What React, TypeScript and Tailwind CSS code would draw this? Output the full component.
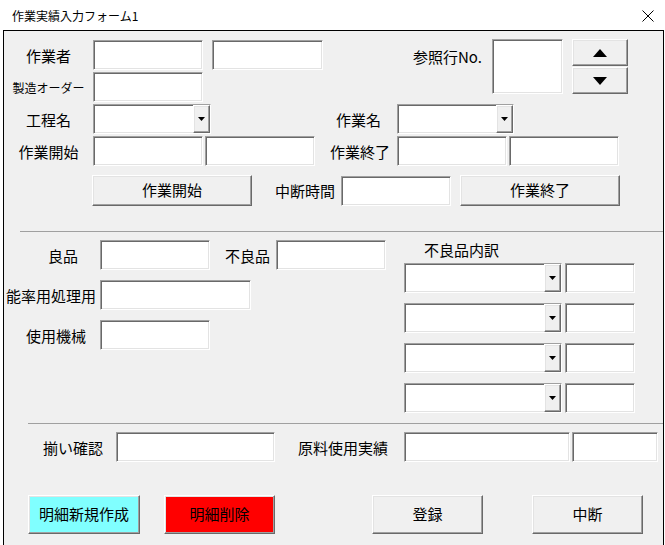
import React from 'react';

// sunken 3D edit box, like a VBA UserForm TextBox
const sunken =
  'bg-white border border-t-[#a0a0a0] border-l-[#a0a0a0] border-b-white border-r-white shadow-[inset_1px_1px_0_#696969,inset_-1px_-1px_0_#e3e3e3]';

// raised 3D command button
const raised =
  'border border-t-white border-l-white border-b-[#696969] border-r-[#696969] shadow-[inset_-1px_-1px_0_#a0a0a0,inset_1px_1px_0_#e3e3e3]';

const TextBox = ({ className = '' }: { className?: string }) => (
  <div className={`h-[30px] shrink-0 ${sunken} ${className}`} />
);

const ComboBox = ({ className = '' }: { className?: string }) => (
  <div className={`h-[30px] shrink-0 flex justify-end ${sunken} ${className}`}>
    <div className={`w-[17px] h-full flex items-center justify-center bg-[#f0f0f0] ${raised}`}>
      <svg width="7" height="4" viewBox="0 0 7 4">
        <path d="M0 0h7L3.5 4z" fill="#000" />
      </svg>
    </div>
  </div>
);

const Button = ({
  label,
  className = '',
}: {
  label: string;
  className?: string;
}) => (
  <button
    className={`shrink-0 flex items-center justify-center text-[15px] text-black ${raised} ${className}`}
  >
    {label}
  </button>
);

const App = () => {
  return (
    <div
      className="w-[665px] h-[545px] overflow-hidden bg-white text-[15px] text-black"
      style={{ fontFamily: '"Noto Sans CJK JP", "Noto Sans", sans-serif' }}
    >
      {/* title bar */}
      <div className="h-[30px] flex items-center justify-between pl-[12px] pr-[11px]">
        <span className="text-[12px] leading-none mt-[1px]">作業実績入力フォーム1</span>
        <svg width="12" height="12" viewBox="0 0 12 12" className="mt-[1px]">
          <path d="M0.5 0.5l11 11M11.5 0.5l-11 11" stroke="#000" strokeWidth="1" />
        </svg>
      </div>

      {/* form body */}
      <div className="ml-[3px] w-[661px] h-[515px] bg-[#f0f0f0] border-l border-r border-t border-black">
        {/* top block: 作業者 / 製造オーダー / 参照行 */}
        <div className="flex h-[63px] mt-[8px]">
          <div className="flex flex-col gap-[2px] pt-[1px]">
            <div className="flex items-center">
              <span className="w-[89px] text-center pt-[2px]">作業者</span>
              <TextBox className="w-[110px]" />
              <TextBox className="w-[111px] ml-[9px]" />
            </div>
            <div className="flex items-center">
              <span className="w-[89px] text-center text-[12px] pt-[2px]">製造オーダー</span>
              <TextBox className="w-[110px]" />
            </div>
          </div>
          <span className="ml-[90px] w-[79px] mt-[7px] h-[20px]">参照行No.</span>
          <div className={`w-[71px] h-[55px] ${sunken}`} />
          <div className="ml-[9px] flex flex-col gap-[1px]">
            <div className={`w-[56px] h-[27px] flex items-center justify-center ${raised}`}>
              <svg width="14" height="8" viewBox="0 0 14 8">
                <path d="M7 0L14 8H0z" fill="#000" />
              </svg>
            </div>
            <div className={`w-[56px] h-[27px] flex items-center justify-center ${raised}`}>
              <svg width="14" height="8" viewBox="0 0 14 8">
                <path d="M0 0h14L7 8z" fill="#000" />
              </svg>
            </div>
          </div>
        </div>

        {/* 工程名 / 作業名 */}
        <div className="flex items-center mt-[2px]">
          <span className="w-[89px] text-center pt-[2px]">工程名</span>
          <ComboBox className="w-[118px]" />
          <span className="w-[186px] text-right pr-[16px] pt-[2px]">作業名</span>
          <ComboBox className="w-[117px]" />
        </div>

        {/* 作業開始 / 作業終了 */}
        <div className="flex items-center mt-[2px]">
          <span className="w-[89px] text-center pt-[2px]">作業開始</span>
          <TextBox className="w-[110px]" />
          <TextBox className="w-[110px] ml-[2px]" />
          <span className="w-[82px] text-right pr-[7px] pt-[2px]">作業終了</span>
          <TextBox className="w-[110px]" />
          <TextBox className="w-[110px] ml-[2px]" />
        </div>

        {/* buttons + 中断時間 */}
        <div className="flex items-center mt-[9px]">
          <Button label="作業開始" className="ml-[88px] w-[160px] h-[31px]" />
          <span className="ml-[23px] w-[66px] pt-[2px]">中断時間</span>
          <TextBox className="w-[110px]" />
          <Button label="作業終了" className="ml-[9px] w-[160px] h-[31px]" />
        </div>

        <div className="mt-[25px] ml-[16px] border-t border-[#a0a0a0]" />

        {/* 良品 / 不良品 / 不良品内訳 */}
        <div className="flex mt-[8px]">
          <div className="w-[382px] flex flex-col gap-[10px]">
            <div className="flex items-center">
              <span className="w-[96px] text-right pr-[22px] pt-[2px]">良品</span>
              <TextBox className="w-[110px]" />
              <span className="w-[66px] text-right pr-[6px] pt-[2px]">不良品</span>
              <TextBox className="w-[110px]" />
            </div>
            <div className="flex items-center">
              <span className="w-[96px] text-right pr-[4px] pt-[2px]">能率用処理用</span>
              <TextBox className="w-[151px]" />
            </div>
            <div className="flex items-center">
              <span className="w-[96px] text-right pr-[14px] pt-[2px]">使用機械</span>
              <TextBox className="w-[110px]" />
            </div>
          </div>
          <div className="ml-[18px] flex flex-col">
            <span className="ml-[20px] h-[18px] leading-[18px] mt-[1px]">不良品内訳</span>
            <div className="mt-[4px] flex flex-col gap-[10px]">
              {[0, 1, 2, 3].map((i) => (
                <div key={i} className="flex">
                  <ComboBox className="w-[158px]" />
                  <TextBox className="w-[70px] ml-[3px]" />
                </div>
              ))}
            </div>
          </div>
        </div>

        <div className="mt-[10px] ml-[24px] border-t border-[#a0a0a0]" />

        {/* 揃い確認 / 原料使用実績 */}
        <div className="flex items-center mt-[8px]">
          <span className="w-[112px] pl-[39px] pt-[2px]">揃い確認</span>
          <TextBox className="w-[159px]" />
          <span className="w-[129px] pl-[23px] pt-[2px]">原料使用実績</span>
          <TextBox className="w-[166px]" />
          <TextBox className="w-[86px] ml-[2px]" />
        </div>

        {/* bottom buttons */}
        <div className="flex mt-[33px]">
          <Button label="明細新規作成" className="ml-[24px] w-[112px] h-[39px] bg-[#80ffff]" />
          <Button label="明細削除" className="ml-[24px] w-[111px] h-[39px] bg-[#ff0000]" />
          <Button label="登録" className="ml-[97px] w-[111px] h-[39px]" />
          <Button label="中断" className="ml-[49px] w-[111px] h-[39px]" />
        </div>
      </div>
    </div>
  );
};

export default App;
